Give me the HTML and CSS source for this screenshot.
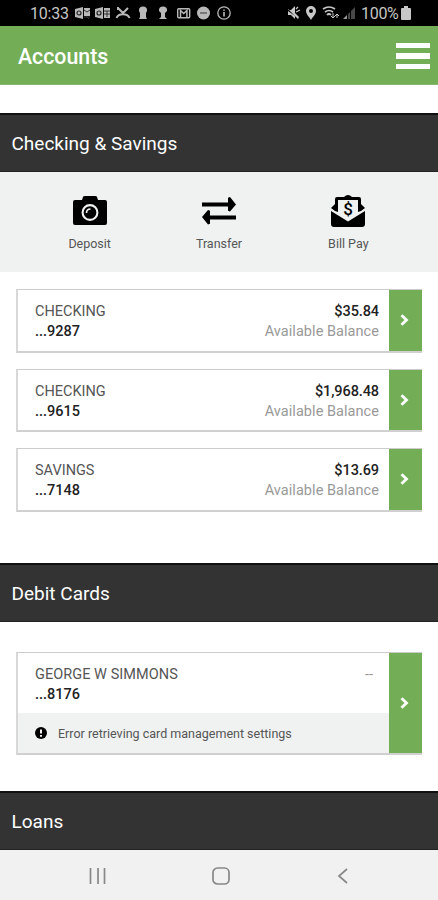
FILE: index.html
```html
<!DOCTYPE html>
<html lang="en">
<head>
<meta charset="utf-8">
<meta name="viewport" content="width=device-width, initial-scale=1">
<title>Accounts</title>
<link rel="stylesheet" href="styles.css">
</head>
<body>
<div class="status">
  <span class="clock">10:33</span>
  <svg class="notices" width="158" height="16" viewBox="0 0 158 16" fill="#b9b9b9">
    <!-- mail clients -->
    <path d="M0 4l8-2v12l-8-2zM9 3h6v8H9z"/><path d="M9 5l3 2 3-2M9 12h6M11 11l3 3" fill="none" stroke="#333"/><circle cx="4" cy="8" r="2" fill="none" stroke="#222" stroke-width="1.2"/>
    <path d="M20 4l8-2v12l-8-2zM29 3h6v10h-6z"/><path d="M29 6h6M29 9h6M32 6v6" fill="none" stroke="#333"/><circle cx="24" cy="8" r="2" fill="none" stroke="#222" stroke-width="1.2"/>
    <!-- missed call -->
    <path d="M43 3l5 5 5-5M43 2v3M41.500 13c2-5 11-5 13 0" fill="none" stroke="#b9b9b9" stroke-width="2"/>
    <!-- figures -->
    <path d="M64 5a4 3.500 0 0 1 8 0l0 1-1 2v4l1 2h-8l1-2V8l-1-2zM84 5a4 3.500 0 0 1 8 0l0 1-2 2v4l2 2h-8l2-2V8l-2-2z"/>
    <!-- envelope -->
    <rect x="102.700" y="3.700" width="12" height="9" rx="1" fill="none" stroke="#b9b9b9" stroke-width="1.400"/><path d="M105.500 12V5.500l3.200 3 3.200-3V12" fill="none" stroke="#b9b9b9" stroke-width="1.500"/>
    <circle cx="128.500" cy="8" r="6.500"/><path d="M125 8h7" stroke="#777" stroke-width="2"/>
    <circle cx="149" cy="8" r="6.200" fill="none" stroke="#b9b9b9" stroke-width="1.300"/><path d="M149 4.500v1.300M149 7v4.500" stroke="#b9b9b9" stroke-width="1.600"/>
  </svg>
  <svg class="signals" width="70" height="16" viewBox="0 0 70 16" fill="#c8c8c8">
    <path d="M1 5h3l4-4v7l4 4-1 2L1 4zM1 6v4h3l4 4v-3z"/><path d="M9 7l4-2M9 4l2-2" stroke="#c8c8c8" stroke-width="1.300"/>
    <path fill-rule="evenodd" d="M24 1a5 5 0 0 1 5 5c0 3-2.500 5-5 9-2.500-4-5-6-5-9a5 5 0 0 1 5-5zm0 3a2 2 0 1 0 0 4 2 2 0 0 0 0-4z"/>
    <path d="M36 4q6-4 12 0M38 7q4-3 8 0M40 10q2-2 4 0" fill="none" stroke="#c8c8c8" stroke-width="1.700"/><path d="M46 8v5M44 11l2 2 2-2M50 13V9M48 11l2-2 2 2" fill="none" stroke="#c8c8c8"/>
    <path d="M56 14l4-4v4z" fill="#999"/><path d="M61 9l2-2v7h-2zM64 6l4-4v12h-4z" fill="#484848"/>
  </svg>
  <span class="percent">100%</span>
  <svg class="battery" width="10" height="14" viewBox="0 0 10 14"><path d="M3 0h4v2h2q1 0 1 1v10q0 1-1 1H1q-1 0-1-1V3q0-1 1-1h2z" fill="#c8c8c8"/></svg>
</div>
<header class="header">
  <h1>Accounts</h1>
  <div class="menu"><i></i><i></i><i></i></div>
</header>
<main>
  <h2 class="section">Checking &amp; Savings</h2>
  <nav class="actions">
    <div class="action">
      <svg width="34" height="36" viewBox="0 0 34 36"><path d="M2 7h7l1-3q0-1 2-1h10q2 0 2 1l1 3h7q2 0 2 2v21q0 2-2 2H2q-2 0-2-2V9q0-2 2-2z"/><circle cx="17" cy="19.500" r="7.400" fill="none" stroke="#eff2f1" stroke-width="2.100"/><path d="M13.500 20q0-4 4-4" fill="none" stroke="#eff2f1" stroke-width="1.600"/></svg>
      <span>Deposit</span>
    </div>
    <div class="action">
      <svg width="34" height="36" viewBox="0 0 34 36"><path d="M0 9.500h26V4.700l2-.7 6 7.500-6 7-2-.7v-4.300H0zM34 22.500H8v-4.800l-2-.7-6 7 6 7.500 2-.7v-4.300h26z"/></svg>
      <span class="transfer">Transfer</span>
    </div>
    <div class="action">
      <svg width="34" height="36" viewBox="0 0 34 36"><path d="M0 18l17 10.500L34 18v13q0 3-3 3H3q-3 0-3-3z"/><path d="M4 18l-4-3 4-4V6q0-2 2-2h7q4-4 8 0h7q2 0 2 2v5l4 4-4 3-3 1V7H7v12z"/><text x="17" y="22" class="dollar">$</text></svg>
      <span>Bill Pay</span>
    </div>
  </nav>
  <div class="accounts">
    <article class="card">
      <div class="body"><div class="row"><span>CHECKING</span><b class="amount">$35.84</b></div><div class="row"><b class="number">...9287</b><span class="avail">Available Balance</span></div></div>
      <div class="go"><svg width="9" height="12" viewBox="0 0 9 12"><path d="M1.500 1.300L6.500 6l-5 4.700"/></svg></div>
    </article>
    <article class="card">
      <div class="body"><div class="row"><span>CHECKING</span><b class="amount">$1,968.48</b></div><div class="row"><b class="number">...9615</b><span class="avail">Available Balance</span></div></div>
      <div class="go"><svg width="9" height="12" viewBox="0 0 9 12"><path d="M1.500 1.300L6.500 6l-5 4.700"/></svg></div>
    </article>
    <article class="card">
      <div class="body"><div class="row"><span>SAVINGS</span><b class="amount">$13.69</b></div><div class="row"><b class="number">...7148</b><span class="avail">Available Balance</span></div></div>
      <div class="go"><svg width="9" height="12" viewBox="0 0 9 12"><path d="M1.500 1.300L6.500 6l-5 4.700"/></svg></div>
    </article>
  </div>
  <h2 class="section">Debit Cards</h2>
  <div class="debit">
    <article class="card tall">
      <div class="body">
        <div class="row"><span class="owner">GEORGE W SIMMONS</span><span class="dash">--</span></div>
        <div class="row"><b class="number">...8176</b></div>
        <div class="error"><svg width="12" height="12" viewBox="0 0 12 12"><circle cx="6" cy="6" r="6"/><path d="M6 2.500v4M6 8v1.700" stroke="#fff" stroke-width="1.900"/></svg><span>Error retrieving card management settings</span></div>
      </div>
      <div class="go"><svg width="9" height="12" viewBox="0 0 9 12"><path d="M1.500 1.300L6.500 6l-5 4.700"/></svg></div>
    </article>
  </div>
  <h2 class="section">Loans</h2>
</main>
<footer class="system">
  <svg width="18" height="20" viewBox="0 0 18 20"><path d="M1.500 2v16M9 2v16M15.500 2v16"/></svg>
  <svg width="18" height="20" viewBox="0 0 18 20"><rect x="1" y="2" width="16" height="16" rx="4.500"/></svg>
  <svg width="18" height="20" viewBox="0 0 18 20"><path d="M13 3L5 10l8 7"/></svg>
</footer>
</body>
</html>
```
FILE: styles.css
```css
* { box-sizing: border-box; }
body { margin: 0; width: 438px; height: 900px; overflow: hidden; background: #fff; font-family: Roboto, sans-serif; color: #555; }
svg { display: block; flex: none; }
.status { height: 26px; background: #000; color: #c5c5c5; display: flex; align-items: center; padding-left: 30px; font-size: 16px; white-space: nowrap; }
.clock { width: 45px; letter-spacing: -.2px; }
.signals { margin-left: 54px; }
.percent { width: 40px; margin-left: 4px; letter-spacing: -.3px; }
.header { height: 59px; padding: 3px 8px 0 18px; background: #73ae57; display: flex; align-items: center; justify-content: space-between; border-bottom: 1px solid #88b673; }
h1 { margin: 0; color: #fff; font-size: 21.300px; font-weight: 500; line-height: 28px; }
.menu { width: 34px; display: grid; gap: 5px; margin-top: -1px; }
.menu i { height: 5.500px; background: #fff; }
main { padding-top: 28px; }
.section { height: 59px; margin: 0; padding: 0 11.500px; background: #333; color: #fff; font-size: 19px; font-weight: 400; line-height: 57px; border-top: 2px solid #111; border-bottom: 1px solid #222; }
.actions { height: 100px; background: #eff2f1; padding: 21px 25px 0; display: grid; grid-template-columns: repeat(3, 1fr); }
.action { display: flex; flex-direction: column; align-items: center; font-size: 12.500px; line-height: 18px; color: #555; gap: 6px; }
.accounts { height: 291px; padding: 17px 16px 0; display: flex; flex-direction: column; gap: 16px; }
.card { height: 63.500px; display: flex; border: 1px solid #ccc; border-bottom: 2px solid #d0d0d0; border-left: 2px solid #d8d8d8; border-right: 0; background: #fff; flex: none; font-size: 14.500px; }
.body { flex: 1; padding-top: 12px; }
.row { height: 20px; line-height: 20px; display: flex; justify-content: space-between; padding: 0 10px 0 17px; }
.row b { color: #222; font-weight: 500; }
.amount { letter-spacing: -.1px; }
.avail { color: #999; letter-spacing: .05px; }
.owner { letter-spacing: .05px; }
.go { width: 33px; background: #73ae57; display: flex; align-items: center; padding-left: 11px; }
.go path { fill: none; stroke: #fff; stroke-width: 2.800; }
.debit { height: 169px; padding: 30px 16px 0; }
.tall { height: 103px; }
.tall .body { display: flex; flex-direction: column; }
.dash { color: #999; padding-right: 6px; }
.error { height: 40px; margin-top: auto; padding-left: 17px; background: #eff2f1; display: flex; align-items: center; gap: 11px; font-size: 12.500px; color: #555; }
.system { height: 51px; background: #f1f1f1; display: flex; justify-content: space-between; align-items: center; padding: 1px 86px 0 89px; }
.system svg { fill: none; stroke: #888; stroke-width: 1.700; }
.dollar { font: 500 17px Roboto, sans-serif; text-anchor: middle; }
```
